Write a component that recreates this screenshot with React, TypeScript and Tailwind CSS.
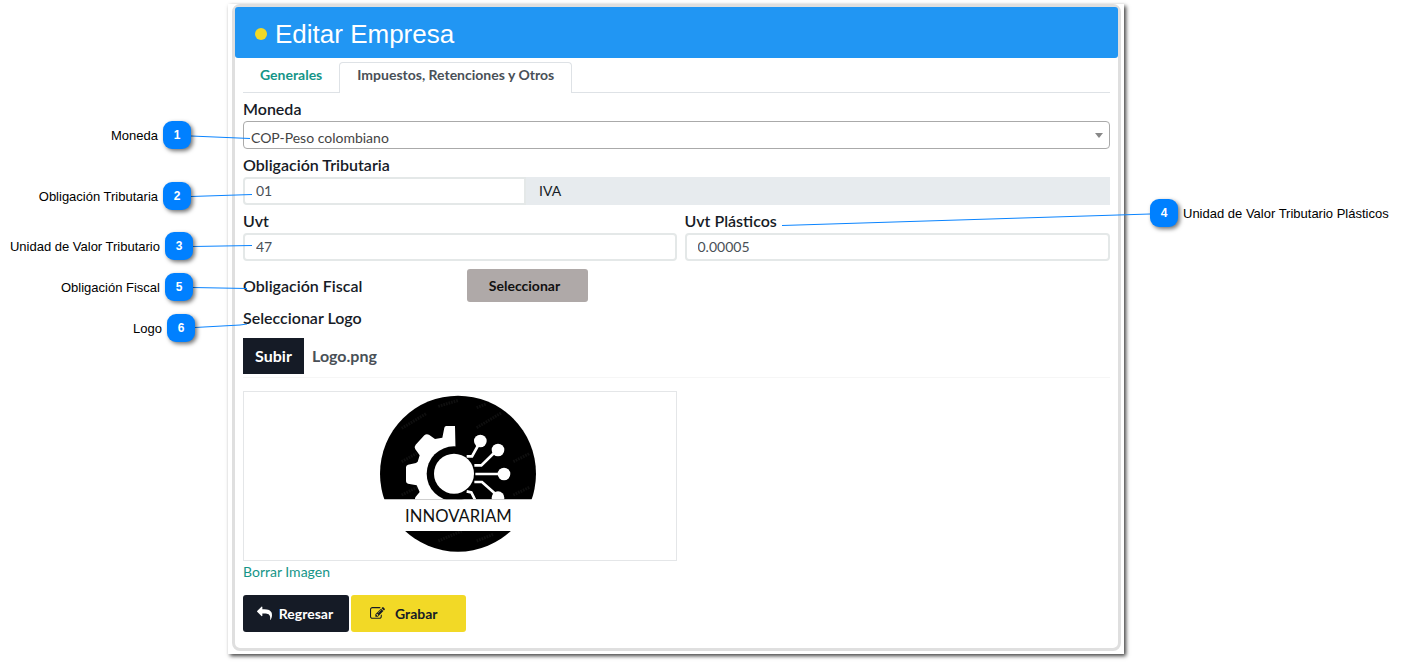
import React from "react";

const fieldClass =
  "block h-7 w-full border-2 border-[#e4e8e8] bg-white px-[11px] pb-0.5 text-sm leading-5 text-[#495057] outline-none";
const labelClass = "block text-base leading-6 font-semibold text-[#161b26]";

function Badge({ n }: { n: number }) {
  return (
    <span className="flex size-7 items-center justify-center rounded-[9px] bg-[#0080ff] text-xs leading-4 font-bold text-white shadow-[2px_2px_4px_rgba(0,0,0,0.55)]">
      {n}
    </span>
  );
}

function Callout({ n, text, place, flip }: { n: number; text: string; place: string; flip?: boolean }) {
  return (
    <div
      className={`absolute flex items-center gap-[5px] whitespace-nowrap ${flip ? "flex-row-reverse" : ""} ${place}`}
    >
      <span className="pt-0.5">{text}</span>
      <Badge n={n} />
    </div>
  );
}

function LeftCallouts() {
  return (
    <aside className="relative z-10 w-[228px] shrink-0 font-['Liberation_Sans',sans-serif] text-[13px] leading-4 text-black">
      <svg
        className="pointer-events-none absolute top-0 left-0 overflow-visible"
        width="228"
        height="400"
        fill="none"
        stroke="#0a84ff"
        aria-hidden="true"
      >
        <path d="M191 136L250 138.5M191 196.5L252 194.5M193 246.5L252 245.5M193 287.5L247 288.5M195 327.5L240 325L247 324" />
      </svg>
      <Callout n={1} text="Moneda" place="top-[121px] right-[37px]" />
      <Callout n={2} text="Obligación Tributaria" place="top-[182px] right-[37px]" />
      <Callout n={3} text="Unidad de Valor Tributario" place="top-[232px] right-[35px]" />
      <Callout n={5} text="Obligación Fiscal" place="top-[273px] right-[35px]" />
      <Callout n={6} text="Logo" place="top-[314px] right-[33px]" />
    </aside>
  );
}

function RightCallouts() {
  return (
    <aside className="relative z-10 w-[281px] shrink-0 font-['Liberation_Sans',sans-serif] text-[13px] leading-4 text-black">
      <svg
        className="pointer-events-none absolute top-0 left-0 overflow-visible"
        width="281"
        height="400"
        fill="none"
        stroke="#0a84ff"
        aria-hidden="true"
      >
        <path d="M26 214L-342 225.5" />
      </svg>
      <Callout n={4} text="Unidad de Valor Tributario Plásticos" place="top-[199px] left-[26px]" flip />
    </aside>
  );
}

function ReplyIcon() {
  return (
    <svg viewBox="0 0 1792 1792" className="size-[15px]" fill="currentColor" aria-hidden="true">
      <path d="M1792 1120q0 166-127 451-3 7-10.5 24t-13.5 30-13 22q-12 17-28 17-15 0-23.5-10t-8.5-25q0-9 2.5-26.5t2.5-23.5q5-68 5-123 0-101-17.5-181t-48.5-138.5-80-101-105.5-69.5-133-42.5-154-21.5-175.5-6h-224v256q0 26-19 45t-45 19-45-19l-512-512q-19-19-19-45t19-45l512-512q19-19 45-19t45 19 19 45v256h224q713 0 875 403 53 134 53 333z" />
    </svg>
  );
}

function EditIcon() {
  return (
    <svg viewBox="0 0 1792 1792" className="size-[15px]" fill="currentColor" aria-hidden="true">
      <path d="M888 1184l116-116-152-152-116 116v56h96v96h56zm440-720q-16-16-33 1l-350 350q-17 17-1 33t33-1l350-350q17-17 1-33zm80 594v190q0 119-84.5 203.5t-203.5 84.5h-832q-119 0-203.5-84.5t-84.5-203.5v-832q0-119 84.5-203.5t203.5-84.5h832q63 0 117 25 15 7 18 23 3 17-9 29l-49 49q-14 14-32 8-23-6-45-6h-832q-66 0-113 47t-47 113v832q0 66 47 113t113 47h832q66 0 113-47t47-113v-126q0-13 9-22l64-64q15-15 35-7t20 29zm-96-738l288 288-672 672h-288v-288zm444 132l-92 92-288-288 92-92q28-28 68-28t68 28l152 152q28 28 28 68t-28 68z" />
    </svg>
  );
}

function CompanyLogo() {
  return (
    <svg viewBox="27 30 474 474" className="size-[158px]" role="img" aria-label="INNOVARIAM">
      <defs>
        <clipPath id="upper">
          <rect x="0" y="0" width="540" height="343" />
        </clipPath>
        <clipPath id="lower">
          <rect x="0" y="438" width="540" height="100" />
        </clipPath>
      </defs>
      <g clipPath="url(#upper)">
        <circle cx="264" cy="266" r="234" fill="#000" />
        <g stroke="#0f0f0f" strokeWidth="9" strokeDasharray="5 3">
          <path d="M205 64l60-18M320 68l30-12M95 130l75-45M320 128l75-45M95 230l45-25M430 230l50-25M95 330l60-30M430 330l50-24" />
        </g>
        <path
          d="M255 123H229Q224 123 223 128L217 158L195 162L177 149Q169 145 163 151L137 179Q131 186 136 193L149 211L143 230L138 234L114 239Q108 241 108 247V289Q108 295 114 296L140 301L149 321L136 337L134 345H260Z"
          fill="#fff"
        />
        <circle cx="252" cy="266" r="82" fill="#000" />
        <circle cx="252" cy="266" r="60" fill="#fff" />
        <g fill="none" stroke="#fff" strokeWidth="8">
          <path d="M290 214H306L325 180M313 241H334L372 204M316 267H390M313 291H336L380 330M290 319L304 322L318 350" />
        </g>
        <g fill="#fff">
          <circle cx="331" cy="168" r="19" />
          <circle cx="384" cy="195" r="19" />
          <circle cx="402" cy="267" r="19" />
          <circle cx="384" cy="338" r="19" />
        </g>
      </g>
      <g clipPath="url(#lower)">
        <circle cx="264" cy="266" r="234" fill="#000" />
        <path d="M205 468l70-30M320 468l50-20" stroke="#0f0f0f" strokeWidth="9" strokeDasharray="5 3" />
      </g>
      <text
        x="265"
        y="410"
        textAnchor="middle"
        fill="#111"
        className="font-['Lato',sans-serif] text-[50px]"
      >
        INNOVARIAM
      </text>
    </svg>
  );
}

export default function App() {
  return (
    <div className="flex min-h-screen items-start bg-white pb-2 font-['Lato',sans-serif]">
      <LeftCallouts />
      <main className="mt-1 min-w-0 flex-1 bg-white pr-[3px] pb-[3px] pl-1 shadow-[2px_2px_4px_rgba(0,0,0,0.75)]">
        <div className="rounded-lg border-[3px] border-[#dfdfdf]">
          <header className="flex h-[51px] items-center gap-2 rounded-[3px] bg-[#2196f3] pl-5 font-['Liberation_Sans',sans-serif] text-white">
            <span className="mt-0.5 size-3 rounded-full bg-[#f2d926]" />
            <h1 className="pt-0.5 text-[26px] leading-8">Editar Empresa</h1>
          </header>

          <form className="px-2 pt-1 pb-4" onSubmit={(e) => e.preventDefault()}>
            <nav className="flex h-[31px] border-b border-[#dee2e6] text-sm leading-5 font-bold">
              <a href="#generales" className="px-[17px] pt-[3px] text-[#159588]">
                Generales
              </a>
              <a
                href="#impuestos"
                aria-current="page"
                className="-mb-px rounded-t border border-b-0 border-[#dee2e6] bg-white px-[17px] pt-0.5 text-[#495057]"
              >
                Impuestos, Retenciones y Otros
              </a>
            </nav>

            <div className="flex flex-col gap-1 pt-1">
              <div>
                <label htmlFor="moneda" className={labelClass}>
                  Moneda
                </label>
                <div className="relative">
                  <select
                    id="moneda"
                    className="block h-7 w-full appearance-none rounded border border-[#aaa] bg-white pt-1.5 pr-6 pl-[7px] text-sm leading-5 text-[#444] outline-none"
                  >
                    <option>COP-Peso colombiano</option>
                  </select>
                  <svg
                    viewBox="0 0 8 5"
                    className="pointer-events-none absolute top-3 right-[7px] h-[5px] w-2"
                    fill="#888"
                    aria-hidden="true"
                  >
                    <path d="M0 0H8L4 5Z" />
                  </svg>
                </div>
              </div>

              <div>
                <label htmlFor="obligacion" className={labelClass}>
                  Obligación Tributaria
                </label>
                <div className="flex">
                  <div className="w-[283px] shrink-0">
                    <input id="obligacion" defaultValue="01" className={`${fieldClass} rounded-l`} />
                  </div>
                  <output
                    htmlFor="obligacion"
                    className="flex h-7 flex-1 items-center bg-[#e7ebee] px-[13px] text-sm leading-5 text-[#161b26]"
                  >
                    IVA
                  </output>
                </div>
              </div>

              <div className="flex gap-2">
                <div className="w-1/2 shrink-0">
                  <label htmlFor="uvt" className={labelClass}>
                    Uvt
                  </label>
                  <input id="uvt" defaultValue="47" className={`${fieldClass} rounded`} />
                </div>
                <div className="min-w-0 flex-1">
                  <label htmlFor="uvt-plasticos" className={labelClass}>
                    Uvt Plásticos
                  </label>
                  <input id="uvt-plasticos" defaultValue="0.00005" className={`${fieldClass} rounded`} />
                </div>
              </div>
            </div>

            <div className="flex items-center pt-2">
              <span id="fiscal" className={`${labelClass} w-56`}>
                Obligación Fiscal
              </span>
              <button
                type="button"
                aria-describedby="fiscal"
                className="h-[33px] w-[121px] rounded-[3px] bg-[#afa9a8] pr-1.5 text-sm leading-5 font-bold text-[#111]"
              >
                Seleccionar
              </button>
            </div>

            <div className="border-b border-[#f6f6f6] pt-1 pb-[3px]">
              <span id="logo-label" className={labelClass}>
                Seleccionar Logo
              </span>
              <div className="mt-2 flex items-center gap-2 text-base leading-6 font-bold">
                <button
                  type="button"
                  aria-describedby="logo-label"
                  className="h-9 w-[61px] bg-[#151b26] text-white"
                >
                  Subir
                </button>
                <span className="text-[#495057]">Logo.png</span>
              </div>
            </div>

            <div className="mt-[13px] flex w-1/2 justify-center border border-[#e4e6e8] pt-[3px] pr-[3px] pb-[7px]">
              <CompanyLogo />
            </div>
            <a href="#borrar" className="block w-fit text-sm leading-[22px] text-[#159588]">
              Borrar Imagen
            </a>

            <div className="mt-3 flex gap-0.5 text-sm leading-5 font-bold">
              <button
                type="button"
                className="flex h-[37px] w-[106px] items-center justify-center gap-[7px] rounded-[3px] bg-[#151b26] pr-0.5 text-white"
              >
                <ReplyIcon />
                Regresar
              </button>
              <button
                type="submit"
                className="flex h-[37px] w-[115px] items-center gap-2.5 rounded-[3px] bg-[#f2d926] pl-[19px] text-[#161b26]"
              >
                <EditIcon />
                Grabar
              </button>
            </div>
          </form>
        </div>
      </main>
      <RightCallouts />
    </div>
  );
}
